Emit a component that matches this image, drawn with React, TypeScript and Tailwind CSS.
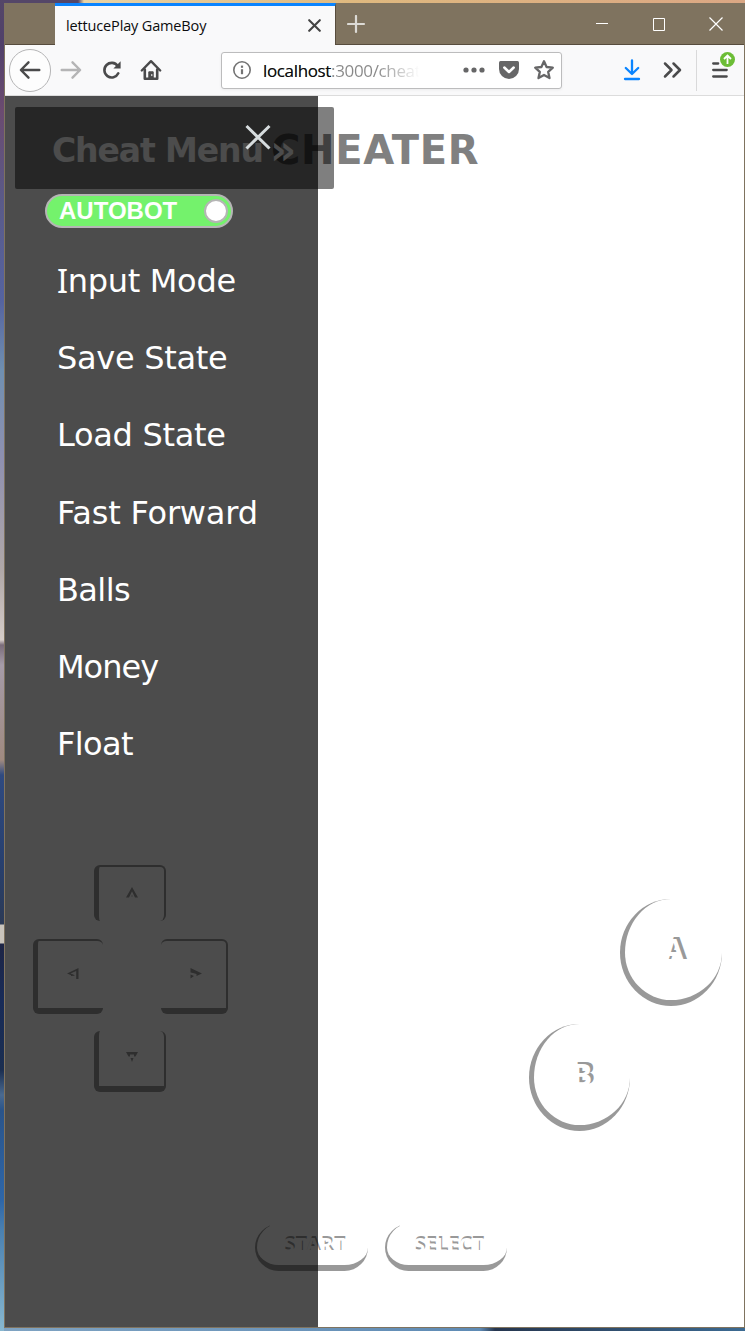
import type { ReactNode } from "react";

const menuItems = [
  { label: "Save State", tracking: "tracking-[-0.3px]" },
  { label: "Load State", tracking: "tracking-[-0.3px]" },
  { label: "Fast Forward", tracking: "tracking-[-0.2px]" },
  { label: "Balls", tracking: "tracking-[-0.6px]" },
  { label: "Money", tracking: "tracking-[-1px]" },
  { label: "Float", tracking: "tracking-[-0.6px]" },
];

function TitleBar() {
  return (
    <div className="flex h-[42px] shrink-0 border-b border-[#574c3d] bg-[#7f735f]">
      <div className="-mb-px ml-[50px] flex h-[42px] w-[281px] items-center justify-between border-t-[3px] border-r border-t-[#0a84ff] border-r-[#574c3d] bg-[#f9f9fa] pr-[14px] pl-[11px]">
        <span className="whitespace-nowrap font-['Open_Sans',sans-serif] text-[14.500px] tracking-[-0.15px] text-[#0c0c0d]">
          lettucePlay GameBoy
        </span>
        <svg width="13" height="13" viewBox="0 0 13 13" stroke="#444" strokeWidth="2.100" strokeLinecap="round">
          <path d="M1.2 1.2 11.8 11.8M11.8 1.2 1.2 11.8" />
        </svg>
      </div>
      <svg className="mt-[12px] ml-[11px]" width="19" height="19" viewBox="0 0 19 19" stroke="#dcdad5" strokeWidth="2.200" strokeLinecap="round">
        <path d="M9 1v16M1 9h16" />
      </svg>
      <div className="mr-[20px] ml-auto flex items-center gap-[44px] pt-[1px]">
        <svg width="13" height="13" viewBox="0 0 13 13" stroke="#fff">
          <path d="M0 5.500h12" />
        </svg>
        <svg width="13" height="13" viewBox="0 0 13 13" stroke="#fff" fill="none">
          <path d="M.5 .5h11v12H.5z" />
        </svg>
        <svg className="-ml-[1px]" width="15" height="14" viewBox="0 0 15 14" stroke="#fff" strokeWidth="1.2">
          <path d="M.5 .5 13.500 13.500M13.500 .5 .5 13.500" />
        </svg>
      </div>
    </div>
  );
}

function Toolbar() {
  return (
    <div className="flex h-[51px] shrink-0 items-center border-b border-[#dcdcdc] bg-[#f9f9fa] pl-1">
      <div className="flex h-[43px] w-[42px] items-center justify-center rounded-full border border-[#b5b5b6] bg-[#fdfdfd]">
        <svg width="22" height="20" viewBox="0 0 22 20" fill="none" stroke="#4a4a4b" strokeWidth="2.4" strokeLinecap="round" strokeLinejoin="round">
          <path d="M20.3 10H2.2M9.5 2.3 1.9 10l7.6 7.7" />
        </svg>
      </div>
      <svg className="ml-[9px]" width="22" height="20" viewBox="0 0 22 20" fill="none" stroke="#b4b4b5" strokeWidth="2.4" strokeLinecap="round" strokeLinejoin="round">
        <path d="M1.7 10h18.1M12.5 2.3l7.6 7.7-7.6 7.7" />
      </svg>
      <svg className="ml-[20px]" width="20" height="20" viewBox="0 0 20 20" fill="none" stroke="#4a4a4b" strokeWidth="2.6" strokeLinecap="round">
        <path d="M16.3 13.3a7.3 7.3 0 1 1-.6-7.3" />
        <path d="M18.6 1.2v7.2h-7.2z" fill="#4a4a4b" stroke="none" />
      </svg>
      <svg className="ml-[18px]" width="22" height="22" viewBox="0 0 22 22" fill="none" stroke="#4a4a4b" strokeLinecap="round" strokeLinejoin="round">
        <path d="M1.8 11.5 11 2.2l9.2 9.3" strokeWidth="2.4" />
        <path d="M4.8 10.5v9.2h12.4v-9.2" strokeWidth="2.6" />
        <path d="M8.8 19v-6.2h4.4V19z" fill="#4a4a4b" strokeWidth="1" />
        <path d="M11.8 15.5v1.2" stroke="#fff" strokeWidth="1" />
      </svg>
      <div className="ml-[59px] flex h-[37px] w-[341px] items-center rounded-[3px] border border-[#bcbcbd] bg-white pl-[11px] shadow-[0_1px_3px_rgba(0,0,0,0.06)]">
        <svg width="19" height="19" viewBox="0 0 19 19" fill="none" stroke="#737373">
          <circle cx="9" cy="9" r="8.2" strokeWidth="1.6" />
          <path d="M9 8.2v5" strokeWidth="2.2" />
          <path d="M9 4.6v2.2" strokeWidth="2.2" />
        </svg>
        <div className="ml-[11px] w-[158px] overflow-hidden whitespace-nowrap bg-gradient-to-r from-[#888] from-[72%] to-white to-[99%] bg-clip-text pt-[2px] font-['Open_Sans',sans-serif] text-[17px] tracking-[-0.35px] text-transparent">
          <span className="text-[#0c0c0d]">localhost</span>:3000/cheater
        </div>
        <svg className="ml-[42px]" width="22" height="6" viewBox="0 0 22 6" fill="#666667">
          <circle cx="3" cy="3" r="2.6" />
          <circle cx="11" cy="3" r="2.6" />
          <circle cx="19" cy="3" r="2.6" />
        </svg>
        <svg className="ml-[13px]" width="22" height="20" viewBox="0 0 22 20">
          <path d="M2.5 1h17q1.5 0 1.5 1.5V9a10 10 0 0 1-20 0V2.500Q1 1 2.500 1z" fill="#666667" />
          <path d="m6.300 7.500 4.700 4.500 4.700-4.500" stroke="#fff" strokeWidth="2.500" fill="none" strokeLinecap="round" strokeLinejoin="round" />
        </svg>
        <svg className="ml-[13px]" width="22" height="22" viewBox="0 0 22 22" fill="none" stroke="#666667" strokeWidth="2.300" strokeLinejoin="round">
          <path d="m11 2.300 2.600 5.700 6.200.7-4.600 4.200 1.300 6.200L11 16l-5.500 3.100 1.300-6.200-4.600-4.200 6.200-.7z" />
        </svg>
      </div>
      <svg className="ml-[61px]" width="18" height="22" viewBox="0 0 18 22" fill="none" stroke="#0a84ff" strokeWidth="2.300" strokeLinecap="round" strokeLinejoin="round">
        <path d="M9 1.500v13M2.800 9 9 15l6.200-6M2 20h14" />
      </svg>
      <svg className="ml-[22px]" width="19" height="18" viewBox="0 0 19 18" fill="none" stroke="#4a4a4b" strokeWidth="2.500" strokeLinecap="round" strokeLinejoin="round">
        <path d="m2 2.500 6.500 6.500L2 15.500M10.500 2.500 17 9l-6.500 6.500" />
      </svg>
      <div className="ml-[14px] h-[41px] w-px bg-[#d9d9da]" />
      <div className="relative ml-[15px] h-[28px] w-[24px]">
        <svg width="24" height="28" viewBox="0 0 24 28" stroke="#4a4a4b" strokeWidth="2.300" strokeLinecap="round">
          <path d="M1.200 7.500h5M1.200 14h13.500M1.200 20.500h13.500" />
        </svg>
        <svg className="absolute -top-[5px] left-[7px]" width="17" height="17" viewBox="0 0 17 17">
          <circle cx="8.500" cy="8.500" r="7.500" fill="#6cbd36" />
          <path d="M8.500 13V4.500M5 8l3.500-3.500L12 8" fill="none" stroke="#fff" strokeWidth="1.800" />
        </svg>
      </div>
    </div>
  );
}

function PadKey({ className, children }: { className: string; children: ReactNode }) {
  return (
    <button className={`flex items-center justify-center rounded-[6px] border-[#999] ${className}`}>
      <svg width="12" height="12" viewBox="0 0 12 12" fill="#999">
        {children}
      </svg>
    </button>
  );
}

function DPad() {
  return (
    <div className="flex w-[195px] flex-col">
      <PadKey className="ml-[61px] h-[56px] w-[72px] border-t-2 border-r-2 border-l-[5px] pb-[2px]">
        <path d="M6 0 12 10.500H9L6 4.300 3 10.500H0z" />
        <path d="M5.500 8.500h1v1h-1z" />
      </PadKey>
      <div className="mt-[18px] flex justify-between">
        <PadKey className="h-[75px] w-[70px] border-t-2 border-b-[6px] border-l-[5px] pb-[2px] pl-[4px]">
          <path d="M0 5.500 11.500 0v11H9.200V3L3.500 5.500 8 7.200 6 8z" />
          <path d="M4 6.500h1.500v1.500H4z" />
        </PadKey>
        <PadKey className="h-[75px] w-[67px] border-t-2 border-r-2 border-b-[6px] pb-[2px] pl-[4px]">
          <path d="M.5 0 12 5.500 6.500 8V6L3 5 .5 4.500z" />
          <path d="M.5 6.500 4 8 .5 10.500z" />
        </PadKey>
      </div>
      <PadKey className="mt-[17px] ml-[61px] h-[61px] w-[72px] border-r-2 border-b-[6px] border-l-[5px] pb-[4px]">
        <path d="M0 1h12L9.500 5.500H8V3.500H4V5.500H2.500z" />
        <path d="M4.500 7h3L6 11z" />
      </PadKey>
    </div>
  );
}

function RoundKey({ label, className }: { label: string; className: string }) {
  return (
    <button
      className={`flex h-[107px] items-center justify-center rounded-[50%] border-b-[6px] border-l-[5px] border-[#999] font-['Open_Sans',sans-serif] text-[30px] leading-none font-bold text-white [text-shadow:3px_-2px_0_#999] ${className}`}
    >
      {label}
    </button>
  );
}

function PillKey({ label, className }: { label: string; className: string }) {
  return (
    <button
      className={`flex h-[47px] items-center justify-center rounded-[24px] border-b-[6px] border-l-2 border-[#999] font-['Open_Sans',sans-serif] text-[20px] leading-none font-bold text-white [text-shadow:1px_-2px_0_#999] pl-[3px] ${className}`}
    >
      {label}
    </button>
  );
}

function GameScreen() {
  return (
    <div className="flex h-full flex-col">
      <h1 className="mt-[31px] ml-[266px] font-['DejaVu_Sans',sans-serif] text-[40px] leading-[47px] font-bold tracking-[0.7px] text-[#808080]">
        CHEATER
      </h1>
      <div className="mt-[691px] flex h-[266px] justify-between pr-[22px] pl-[28px]">
        <DPad />
        <div className="flex w-[193px] flex-col pt-[34px]">
          <RoundKey label="A" className="ml-[91px] w-[102px]" />
          <RoundKey label="B" className="mt-[18px] w-[101px]" />
        </div>
      </div>
      <div className="mt-[93px] ml-[250px] flex gap-[17px]">
        <PillKey label="START" className="w-[113px]" />
        <PillKey label="SELECT" className="w-[122px]" />
      </div>
    </div>
  );
}

function SideMenu() {
  return (
    <nav className="absolute inset-y-0 left-0 w-[313px] bg-black/70 font-['DejaVu_Sans',sans-serif] text-[32px] text-white">
      <div className="flex h-[98px] justify-end pt-[28px] pr-[47px]">
        <svg width="26" height="26" viewBox="0 0 26 26" stroke="#d6dcde" strokeWidth="3">
          <path d="M1.500 2 24.500 24.500M24.500 2 1.500 24.500" />
        </svg>
      </div>
      <div className="ml-[40px] flex h-[34px] w-[188px] items-center justify-between rounded-full border-2 border-[#b5b5b5] bg-[#74f26c] pr-[3px] pl-[12px]">
        <span className="font-['Liberation_Sans',sans-serif] text-[24px] leading-none font-bold">AUTOBOT</span>
        <span className="h-[24px] w-[24px] rounded-full border-2 border-[#b5b5b5] bg-white" />
      </div>
      <ul className="mt-[14.500px] ml-[52px]">
        <li className="flex h-[77.200px] items-center whitespace-nowrap tracking-[-0.3px]">
          <span className="font-['Noto_Sans',sans-serif] text-[32.500px] leading-none">I</span>
          <span>nput Mode</span>
        </li>
        {menuItems.map((item) => (
          <li key={item.label} className={`flex h-[77.200px] items-center whitespace-nowrap ${item.tracking}`}>
            {item.label}
          </li>
        ))}
      </ul>
    </nav>
  );
}

export default function App() {
  return (
    <div className="h-[1331px] w-[745px] overflow-hidden bg-[linear-gradient(90deg,#544668_0,#544668_78px,#e8d3a5_84px,#dfb97f_350px,#dba784_745px)]">
      <div className="h-full bg-[linear-gradient(90deg,#7fa3c2,#5f8bb5_480px,#26364f_495px,#3c6a92_745px)] bg-[length:100%_3px] bg-bottom bg-no-repeat">
        <div className="h-full bg-[linear-gradient(180deg,#544668_0,#50406a_45px,#6b4b70_110px,#5a5a88_200px,#5563a0_300px,#6f8fb0_370px,#8f90b0_460px,#b0a8a8_570px,#d5ccc8_640px,#7a6c7a_645px,#a59ba8_665px,#a08a80_760px,#2f4a80_775px,#28406f_860px,#2c3a55_924px,#c9c4bc_925px,#c9c4bc_943px,#1e2545_944px,#182b58_1000px,#1b2e50_1070px,#4a6a90_1095px,#2a548a_1110px,#2e66a8_1200px,#4a80b0_1230px,#88b8d0_1331px)] bg-[length:4px_100%] bg-no-repeat pt-[3px] pb-[3px] pl-[4px]">
          <div className="flex h-full flex-col border-r border-b border-l border-[#7f735f]">
            <TitleBar />
            <Toolbar />
            <main className="relative min-h-0 flex-1 overflow-hidden bg-white">
              <GameScreen />
              <button className="absolute top-[11px] left-[10px] flex h-[82px] w-[319px] items-center rounded-[2px] bg-black/50 pt-[5px] pl-[37px] font-['DejaVu_Sans',sans-serif] text-[33px] leading-none font-bold tracking-[-1.1px] whitespace-pre text-white">
                <span>Cheat Menu </span>
                <span className="-ml-[3px] text-[40px] leading-[33px]">»</span>
              </button>
              <SideMenu />
            </main>
          </div>
        </div>
      </div>
    </div>
  );
}
